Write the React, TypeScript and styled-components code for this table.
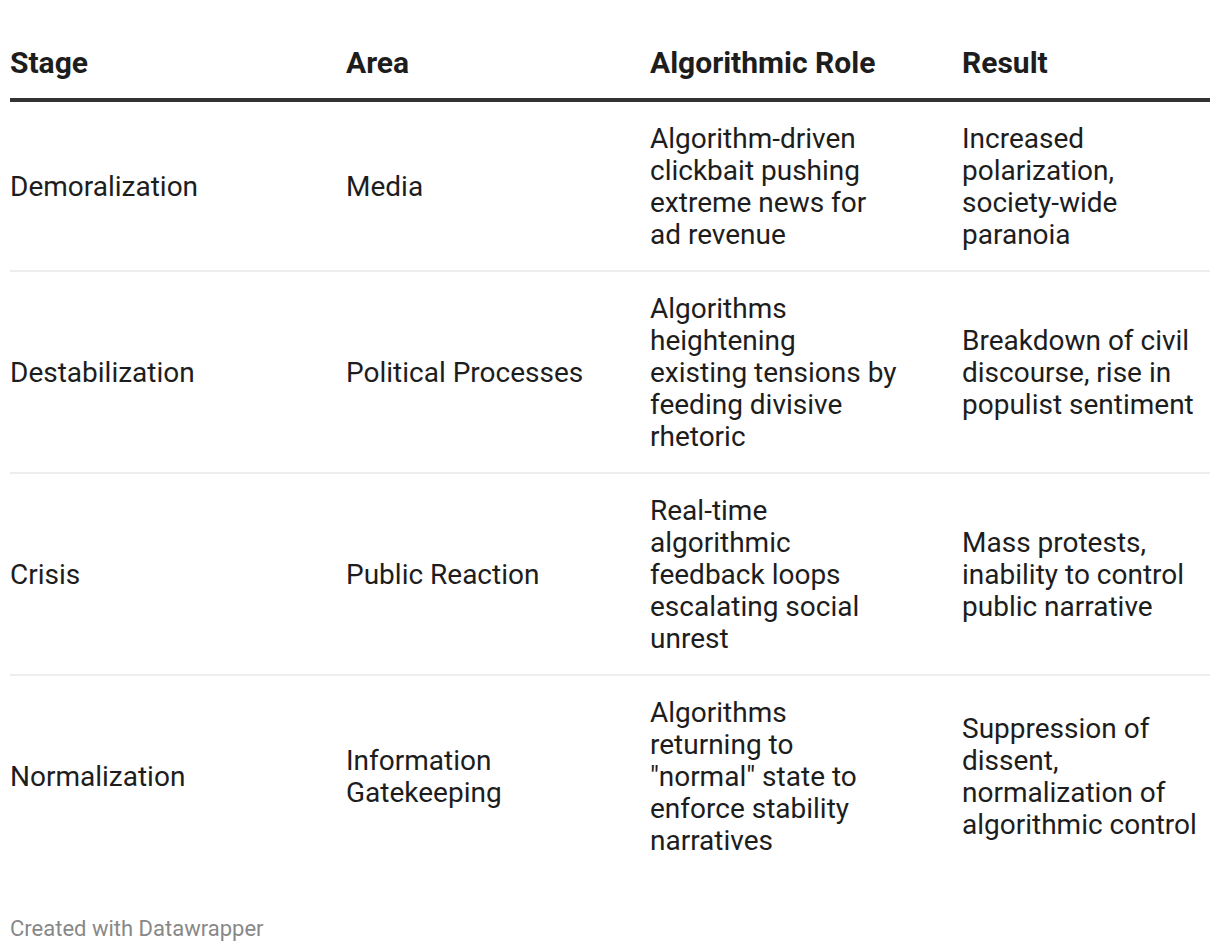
import styled, { createGlobalStyle } from 'styled-components';

const GlobalStyle = createGlobalStyle`
  body {
    margin: 0;
    background: #ffffff;
    font-family: Roboto, 'Liberation Sans', sans-serif;
  }
`;

const Page = styled.main`
  padding: 30px 10px 0;
`;

const Table = styled.div`
  display: grid;
  grid-template-columns: 336px 304px 312px 248px;
`;

const HeadCell = styled.div<{ $padRight?: number }>`
  padding: 15px ${(p) => p.$padRight ?? 0}px 17px 0;
  font-size: 30px;
  font-weight: 700;
  line-height: 36px;
  color: #1d1d1d;
  border-bottom: 4px solid #333333;
`;

const Cell = styled.div<{ $padRight?: number; $last?: boolean }>`
  display: flex;
  align-items: center;
  padding: 21px ${(p) => p.$padRight ?? 0}px 19px 0;
  font-size: 28px;
  line-height: 32px;
  color: #1d1d1d;
  border-bottom: ${(p) => (p.$last ? 'none' : '2px solid #eeeeee')};
`;

const Footer = styled.footer`
  margin-top: 40px;
  font-size: 22px;
  line-height: 26px;
  color: #888888;
`;

const columns = [
  { title: 'Stage', pad: 0 },
  { title: 'Area', pad: 20 },
  { title: 'Algorithmic Role', pad: 64 },
  { title: 'Result', pad: 0 },
];

const rows = [
  [
    'Demoralization',
    'Media',
    'Algorithm-driven clickbait pushing extreme news for ad revenue',
    'Increased polarization, society-wide paranoia',
  ],
  [
    'Destabilization',
    'Political Processes',
    'Algorithms heightening existing tensions by feeding divisive rhetoric',
    'Breakdown of civil discourse, rise in populist sentiment',
  ],
  [
    'Crisis',
    'Public Reaction',
    'Real-time algorithmic feedback loops escalating social unrest',
    'Mass protests, inability to control public narrative',
  ],
  [
    'Normalization',
    'Information Gatekeeping',
    'Algorithms returning to "normal" state to enforce stability narratives',
    'Suppression of dissent, normalization of algorithmic control',
  ],
];

export default function App() {
  return (
    <>
      <GlobalStyle />
      <Page>
        <Table>
          {columns.map((c) => (
            <HeadCell key={c.title} $padRight={c.pad}>
              {c.title}
            </HeadCell>
          ))}
          {rows.map((row, i) =>
            row.map((text, j) => (
              <Cell
                key={`${i}-${j}`}
                $padRight={columns[j].pad}
                $last={i === rows.length - 1}
              >
                {text}
              </Cell>
            )),
          )}
        </Table>
        <Footer>Created with Datawrapper</Footer>
      </Page>
    </>
  );
}
